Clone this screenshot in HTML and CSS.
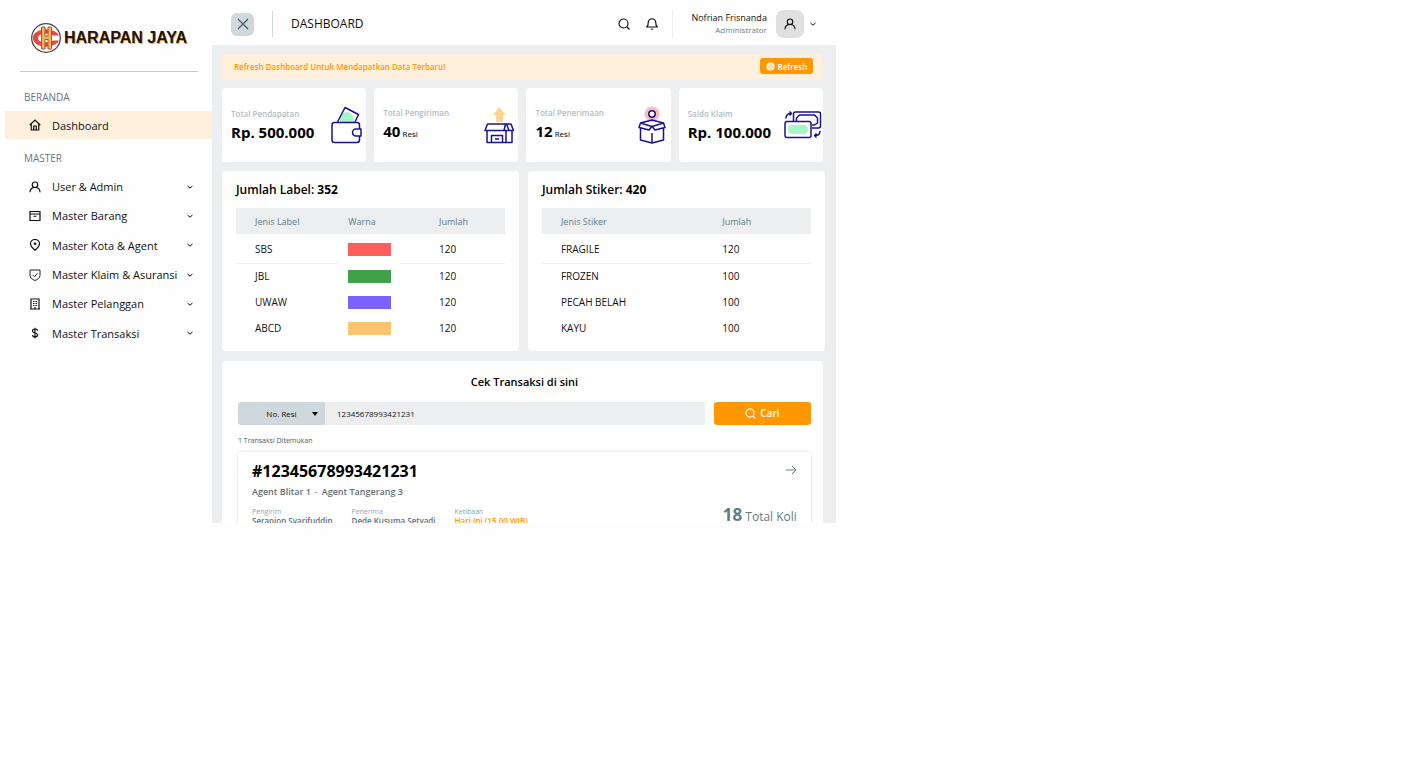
FILE: index.html
```html
<!DOCTYPE html>
<html lang="id">
<head>
<meta charset="utf-8">
<meta name="viewport" content="width=device-width, initial-scale=1">
<title>Harapan Jaya - Dashboard</title>
<link rel="stylesheet" href="styles.css">
</head>
<body>
<svg width="0" height="0" class="sprite" aria-hidden="true">
  <symbol id="chevron" viewBox="0 0 8 8"><path d="M1.500 3 4 5.200 6.500 3" fill="none" stroke="currentColor" stroke-width="1"/></symbol>
  <symbol id="user" viewBox="0 0 24 24"><circle cx="12" cy="7.500" r="5.500"/><path d="M2 22.500c0-5.800 4-9.500 10-9.500s10 3.700 10 9.500"/></symbol>
  <symbol id="search" viewBox="0 0 24 24"><circle cx="11" cy="11" r="9"/><path d="m17.500 17.500 5.500 5.500"/></symbol>
</svg>
<div class="app">
  <aside class="sidebar">
    <a class="brand" href="#">
      <svg class="brand-mark" viewBox="0 0 32 32" aria-hidden="true">
        <circle cx="16" cy="16" r="14.300" fill="#fff" stroke="#4a4548" stroke-width="1.300"/>
        <path d="M17 7.500C8 7.500 3 11 3 16s5 8.500 14 8.500v-4c-6 0-9-1.500-9-4.500s3-4.500 9-4.500z" fill="#e5483f"/>
        <path d="M15 7.500c7 0 12 2 14 6h-6c-2-1.500-4-2-8-2zM15 24.500c7 0 12-2 14-6h-6c-2 1.500-4 2-8 2z" fill="#e5483f"/>
        <path d="M11.500 5H15v9h3V5h3.500v22H18v-9.500h-3V27h-3.500z" fill="#f2b25b" stroke="#b8452f" stroke-width=".900"/>
      </svg>
      <span class="brand-name">HARAPAN JAYA</span>
    </a>
    <h2 class="nav-heading">BERANDA</h2>
    <nav>
      <a class="nav-item active" href="#"><svg class="icon" viewBox="0 0 24 24"><path d="M1.500 12 12 2l10.500 10M4.500 10v12h15V10M9.500 22v-8h5v8"/></svg>Dashboard</a>
    </nav>
    <h2 class="nav-heading">MASTER</h2>
    <nav class="nav-list">
      <a class="nav-item" href="#"><svg class="icon"><use href="#user"/></svg>User &amp; Admin<svg class="chevron"><use href="#chevron"/></svg></a>
      <a class="nav-item" href="#"><svg class="icon" viewBox="0 0 24 24"><path d="M2 8V3h20v5M2 8h20v13H2zM9 12.500h6"/></svg>Master Barang<svg class="chevron"><use href="#chevron"/></svg></a>
      <a class="nav-item" href="#"><svg class="icon" viewBox="0 0 24 24"><path d="M12 22.500C6 17.500 3 14 3 9.500a9 8.500 0 0 1 18 0c0 4.500-3 8-9 13z"/><circle cx="12" cy="9.500" r="1.500"/></svg>Master Kota &amp; Agent<svg class="chevron"><use href="#chevron"/></svg></a>
      <a class="nav-item" href="#"><svg class="icon thin" viewBox="0 0 24 24"><path d="M2 2h20v11c0 5-5 8-10 10C7 21 2 18 2 13zM7.500 12l3.500 3.500 6-7"/></svg>Master Klaim &amp; Asuransi<svg class="chevron"><use href="#chevron"/></svg></a>
      <a class="nav-item" href="#"><svg class="icon" viewBox="0 0 24 24"><path d="M4 22V2h16v20M2 22h20M8 7h3M13 7h3M8 11h3M13 11h3M8 15h3M13 15h3M12 22v-4"/></svg>Master Pelanggan<svg class="chevron"><use href="#chevron"/></svg></a>
      <a class="nav-item" href="#"><svg class="icon" viewBox="0 0 24 24"><path d="M12 1.500v21M17 7.500C17 5 15 4 12 4S7 5.500 7 8s2 3.300 5 4 5 1.700 5 4.200S15 20 12 20s-5-1.300-5-3.800"/></svg>Master Transaksi<svg class="chevron"><use href="#chevron"/></svg></a>
    </nav>
  </aside>

  <div class="content">
    <header class="topbar">
      <button class="close" type="button" aria-label="Tutup menu"><svg viewBox="0 0 12 12"><path d="m1 1 10 10M11 1 1 11"/></svg></button>
      <h1 class="page-title">DASHBOARD</h1>
      <button class="tool" type="button" aria-label="Cari"><svg class="icon"><use href="#search"/></svg></button>
      <button class="tool" type="button" aria-label="Notifikasi"><svg class="icon" viewBox="0 0 24 24"><path d="M1.500 18h21c-2.500-2-3-4-3-9a7.500 7.500 0 0 0-15 0c0 5-.500 7-3 9zM9.500 21.500c1 1.300 4 1.300 5 0"/></svg></button>
      <button class="profile" type="button">
        <span class="who"><span class="who-name">Nofrian Frisnanda</span><span class="who-role">Administrator</span></span>
        <span class="avatar"><svg class="icon"><use href="#user"/></svg></span>
        <svg class="chevron"><use href="#chevron"/></svg>
      </button>
    </header>

    <main class="main">
      <div class="alert">
        <p>Refresh Dashboard Untuk Mendapatkan Data Terbaru!</p>
        <button class="refresh" type="button"><svg viewBox="0 0 10 10"><circle cx="5" cy="5" r="4.500" fill="#fff"/><path d="M3.300 4.200a2 2 0 1 0 3.400 0M5 2.500v2.500" fill="none" stroke="#ff9800" stroke-width=".800"/></svg>Refresh</button>
      </div>

      <section class="stats">
        <article class="stat">
          <div><h3>Total Pendapatan</h3><p class="value">Rp. 500.000</p></div>
          <svg class="art" viewBox="0 0 38 38"><path d="M13 16c0-7 3-10 7-10s7 4 7 10z" fill="#a5f7c6"/><path d="M10.500 16 18 1.500 31.500 8.500 28 16"/><path d="M7.500 16.500H30q2.500 0 2.500 2.500V23M32.500 30v4q0 2.500-2.500 2.500H7.500Q5 36.500 5 34V19q0-2.500 2.500-2.500M34 23v7h-5a3.500 3.500 0 0 1 0-7z"/></svg>
        </article>
        <article class="stat">
          <div><h3>Total Pengiriman</h3><p class="value">40<small> Resi</small></p></div>
          <svg class="art" viewBox="0 0 38 38"><path d="m20 1 7 8h-3v7h-7V9h-3z" fill="#ffd591"/><path d="M8.500 18H32l2.500 6.500H6zM8 24.500V36.500H33V24.500M26.500 18l-1.500 6.500M27.500 18l2.500 6.500M27 24.500v12M12.500 36V29.500h11V36M16 33h4"/></svg>
        </article>
        <article class="stat">
          <div><h3>Total Penerimaan</h3><p class="value">12<small> Resi</small></p></div>
          <svg class="art" viewBox="0 0 38 38"><path d="M20 16c-4-2-7.500-4-7.500-8a7.500 7.500 0 0 1 15 0c0 4-3.500 6-7.500 8z" fill="#ffb9bd"/><circle cx="20" cy="8" r="3.200" fill="#fff"/><path d="m8.500 17 11.500-3 11.500 3-11.500 3.500zM8.500 17 7 21.500l10 2.500 3-3.500 3 3.500 10-2.500-1.500-4.500M8.500 22.500V34L20 37l11.500-3V22.500M20 27v10"/></svg>
        </article>
        <article class="stat">
          <div><h3>Saldo Klaim</h3><p class="value">Rp. 100.000</p></div>
          <svg class="art" viewBox="0 0 38 38"><path d="M9.500 15V8q0-2 2-2H34.500q2 0 2 2V20q0 2-2 2H28M12.500 15v-3l3-3H30.500l3 3v5l-3 2H28"/><path d="M3 15.500h22q2 0 2 2v12q0 2-2 2H3q-2 0-2-2V17.500q0-2 2-2z" fill="#fff"/><rect x="4" y="19" width="20" height="9" rx="4" fill="#a5f7c6" stroke="none"/><path d="M2 12.500q0-5 5-5M5.500 5.500l2 2-2 2M36 25q0 4.500-5 4.500M32.500 27.500l-2 2 2 2"/></svg>
        </article>
      </section>

      <section class="panels">
        <article class="panel">
          <h2>Jumlah Label: <b>352</b></h2>
          <table class="labels">
            <thead><tr><th>Jenis Label</th><th>Warna</th><th>Jumlah</th></tr></thead>
            <tbody>
              <tr><td>SBS</td><td><span class="swatch red"></span></td><td>120</td></tr>
              <tr><td>JBL</td><td><span class="swatch green"></span></td><td>120</td></tr>
              <tr><td>UWAW</td><td><span class="swatch violet"></span></td><td>120</td></tr>
              <tr><td>ABCD</td><td><span class="swatch amber"></span></td><td>120</td></tr>
            </tbody>
          </table>
        </article>
        <article class="panel">
          <h2>Jumlah Stiker: <b>420</b></h2>
          <table class="stickers">
            <thead><tr><th>Jenis Stiker</th><th>Jumlah</th></tr></thead>
            <tbody>
              <tr><td>FRAGILE</td><td>120</td></tr>
              <tr><td>FROZEN</td><td>100</td></tr>
              <tr><td>PECAH BELAH</td><td>100</td></tr>
              <tr><td>KAYU</td><td>100</td></tr>
            </tbody>
          </table>
        </article>
      </section>

      <section class="check">
        <h2>Cek Transaksi di sini</h2>
        <form class="lookup">
          <div class="kind">
            <select aria-label="Jenis pencarian"><option>No. Resi</option></select>
            <svg viewBox="0 0 6 6" aria-hidden="true"><path d="M0 1h6L3 5z"/></svg>
          </div>
          <input type="text" value="12345678993421231" aria-label="Nomor resi">
          <button type="submit"><svg class="icon"><use href="#search"/></svg>Cari</button>
        </form>
        <p class="found">1 Transaksi Ditemukan</p>
        <article class="result">
          <div class="result-head">
            <h3>#12345678993421231</h3>
            <a href="#" aria-label="Detail transaksi"><svg viewBox="0 0 12 12"><path d="M1 6h10M7 2l4 4-4 4"/></svg></a>
          </div>
          <p class="route"><span>Agent Blitar 1</span><i>-</i><span>Agent Tangerang 3</span></p>
          <div class="result-body">
            <dl>
              <div><dt>Pengirim</dt><dd>Serapion Syarifuddin</dd></div>
              <div><dt>Penerima</dt><dd>Dede Kusuma Setyadi</dd></div>
              <div><dt>Ketibaan</dt><dd class="eta">Hari Ini (15.00 WIB)</dd></div>
            </dl>
            <p class="total"><b>18</b> Total Koli</p>
          </div>
        </article>
      </section>
    </main>
  </div>
</div>
</body>
</html>
```
FILE: styles.css
```css
* { box-sizing: border-box; }
body, h1, h2, h3, p, dl, dd { margin: 0; }
body {
  background: #fefefe;
  color: #111;
  font-family: "Open Sans", "Noto Sans", sans-serif;
  font-size: 11px;
}
a { color: inherit; text-decoration: none; }
button, input, select { font: inherit; color: inherit; border: 0; margin: 0; padding: 0; background: none; border-radius: 0; }
button { cursor: pointer; }
.sprite { position: absolute; }
.icon { width: 12px; height: 12px; flex: none; fill: none; stroke: currentColor; stroke-width: 2.4; }
.icon.thin { stroke-width: 1.8; }
.chevron { width: 8px; height: 8px; flex: none; }

.app {
  display: grid;
  grid-template-columns: 212px minmax(0, 1fr);
  width: 59.2vw;
  min-width: 760px;
  height: 66.7vh;
  overflow: hidden;
}

/* Sidebar */
.sidebar { background: #fefefe; }
.brand {
  display: flex;
  align-items: center;
  gap: 2px;
  height: 72px;
  margin: 0 14px 0 20px;
  padding: 4px 0 0 10px;
  border-bottom: 1px solid #c8c8c8;
}
.brand-mark { width: 32px; height: 32px; flex: none; }
.brand-name {
  font: bold 16px "Liberation Sans", Arial, sans-serif;
  color: #1c1416;
  text-shadow: 1px 1px 0 #f5a04a;
  white-space: nowrap;
}
.nav-heading { padding-left: 24px; font-size: 10px; font-weight: 400; line-height: 14px; color: #6b7680; }
.brand + .nav-heading { margin: 18px 0 7px; }
nav + .nav-heading { margin: 12px 0 7px; }
.nav-item {
  display: flex;
  align-items: center;
  height: 28px;
  margin-left: 5px;
  padding: 0 18px 0 24px;
  white-space: nowrap;
}
.nav-item .icon { margin-right: 11px; }
.nav-item .chevron { margin-left: auto; }
.nav-item.active { background: #fff0de; }
.nav-list { display: grid; grid-auto-rows: 1fr; height: 176px; align-items: center; }

/* Top bar */
.content { display: flex; flex-direction: column; background: #eceef0; min-height: 0; }
.topbar {
  display: flex;
  align-items: center;
  flex: none;
  height: 45px;
  padding: 3px 19px 0 19px;
  background: #fefefe;
}
.close { display: grid; place-items: center; width: 23px; height: 23px; border-radius: 6px; background: #cfd8dc; }
.close svg { width: 12px; height: 12px; stroke: #455a64; stroke-width: 1.2; fill: none; }
.page-title {
  margin: 0 auto 0 18px;
  padding-left: 18px;
  border-left: 1px solid #cfd8dc;
  font-size: 12px;
  font-weight: 400;
  line-height: 26px;
}
.tool { display: grid; margin-right: 16px; }
.tool + .tool { margin-right: 14px; }
.profile { display: flex; align-items: center; padding-left: 18px; border-left: 1px solid #eceff1; }
.who { display: grid; text-align: right; line-height: 12px; }
.who-name { font-size: 9px; }
.who-role { font-size: 8px; color: #6b7f88; }
.avatar { display: grid; place-items: center; width: 28px; height: 28px; margin: 0 5px 0 9px; border-radius: 8px; background: #e0e0e0; }

/* Main */
.main { display: flex; flex-direction: column; padding: 9px 13px 0 10px; min-height: 0; }
.alert {
  display: flex;
  align-items: center;
  justify-content: space-between;
  flex: none;
  height: 26px;
  margin-bottom: 8px;
  padding: 0 10px 2px 12px;
  border-radius: 4px;
  background: #fff0de;
  color: #ff9800;
  font-size: 8px;
  font-weight: 600;
}
.refresh { display: flex; align-items: center; justify-content: center; gap: 3px; width: 53px; height: 16px; border-radius: 3px; background: #ff9800; color: #fff; }
.refresh svg { width: 9px; height: 9px; }

.stats { display: grid; grid-template-columns: repeat(4, minmax(0, 1fr)); gap: 8px; flex: none; margin-bottom: 9px; }
.stat {
  display: flex;
  align-items: center;
  justify-content: space-between;
  height: 74px;
  padding: 0 1px 0 9px;
  border-radius: 4px;
  background: #fff;
  white-space: nowrap;
}
.stat h3 { font-size: 8px; font-weight: 600; line-height: 16px; color: #b0bec5; }
.value { padding-bottom: 2px; font-size: 15px; font-weight: 700; line-height: 20px; color: #000; }
.value small { font-size: 8px; font-weight: 400; white-space: pre; }
.art { width: 38px; height: 38px; flex: none; fill: none; stroke: none; }
.art path:not([fill]), .art circle, .art path[fill="#fff"] { stroke: #1a1290; stroke-width: 1.5; stroke-linejoin: round; }

.panels { display: grid; grid-template-columns: repeat(2, minmax(0, 1fr)); gap: 9px; flex: none; margin: 0 -2px 10px 0; }
.panel { height: 180px; padding: 10px 14px 0; border-radius: 4px; background: #fff; }
.panel h2, .check h2 { font-size: 11px; font-weight: 600; line-height: 18px; color: #000; }
.panel h2 { margin-bottom: 9px; font-size: 12px; }
.panel b { font-weight: 700; }
table { width: 100%; table-layout: fixed; border-collapse: collapse; }
th, td { height: 26px; padding: 0 0 0 19px; text-align: left; }
th { background: #eceef0; font-size: 9px; font-weight: 400; color: #607d8b; }
td { font-size: 10px; line-height: 13px; }
tbody tr:first-child td { height: 29px; padding-top: 2px; border-bottom: 1px solid #eceff1; }
.labels th:nth-child(1) { width: 38%; }
.labels th:nth-child(2) { width: 23%; }
.labels th:nth-child(2), .labels td:nth-child(2) { padding-left: 10px; }
.labels tbody tr td:nth-child(2) { border: 0; }
.labels th:nth-child(3), .labels td:nth-child(3) { padding-left: 39px; }
.stickers th:first-child { width: 60%; }
.swatch { display: block; width: 43px; height: 13px; }
.red { background: #ff5f5c; }
.green { background: #40a047; }
.violet { background: #7b61ff; }
.amber { background: #fcc470; }

/* Transaction lookup */
.check { flex: none; padding: 12px 12px 0 16px; border-radius: 4px; background: #fff; }
.check h2 { text-align: center; margin-bottom: 11px; }
.lookup { display: flex; height: 23px; margin-bottom: 9px; font-size: 8px; }
.kind { position: relative; width: 87px; }
.kind select { appearance: none; width: 100%; height: 100%; padding-bottom: 1px; border-radius: 3px 0 0 3px; background: #cfd8dc; text-align-last: center; }
.kind svg { position: absolute; right: 7px; top: 9px; width: 6px; height: 6px; pointer-events: none; }
.lookup input { flex: 1; min-width: 0; padding: 0 0 1px 12px; background: #eceef0; }
.lookup button { display: flex; align-items: center; justify-content: center; gap: 4px; width: 97px; margin-left: 9px; padding-bottom: 1px; border-radius: 3px; background: #ff9800; color: #fff; font-size: 10px; font-weight: 600; }
.lookup .icon { width: 11px; height: 11px; }
.found { font-size: 7px; line-height: 14px; color: #455a64; }
.result { margin: 3px -1px 0; padding: 9px 14px 0; border: 1px solid #eceff1; border-radius: 4px; box-shadow: 0 0 3px #eceff1; color: #607d8b; }
.result-head { display: flex; justify-content: space-between; }
.result-head svg { display: block; width: 12px; height: 12px; margin-top: 3px; fill: none; stroke: #607d8b; }
.result h3 { font-size: 16px; font-weight: 700; line-height: 20px; color: #000; }
.route { display: flex; gap: 4px; font-size: 9px; font-weight: 600; line-height: 22px; color: #5f7079; }
.route i { font-style: normal; font-weight: 400; }
.result-body { display: flex; justify-content: space-between; align-items: center; height: 26px; }
dl { display: flex; gap: 19px; }
dt { font-size: 7px; line-height: 9px; color: #90a4ae; }
dd { font-size: 8px; font-weight: 600; line-height: 10px; color: #5f7079; }
dd.eta { color: #ff9800; }
.total { font-size: 12px; line-height: 22px; }
.total b { font-size: 17px; }
```
